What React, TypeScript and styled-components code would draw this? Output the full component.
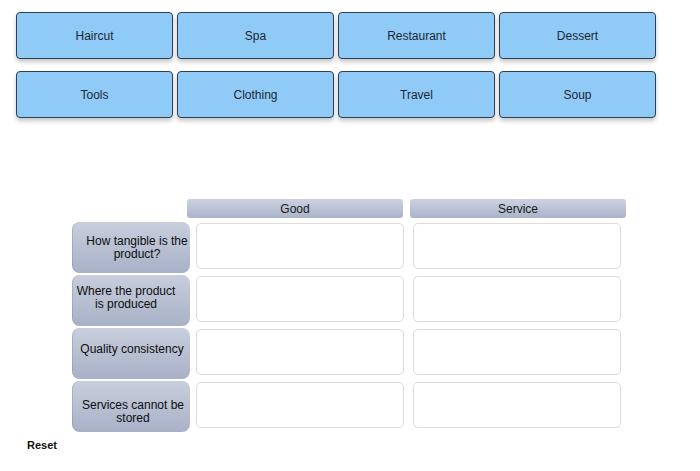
import React from 'react';
import styled, { createGlobalStyle } from 'styled-components';

const GlobalStyle = createGlobalStyle`
  body {
    margin: 0;
    background: #fff;
    font-family: 'Liberation Sans', Arial, sans-serif;
    color: #111;
  }
`;

const Page = styled.div`
  width: 700px;
  height: 471px;
  padding: 12px 0 0 16px;
  box-sizing: border-box;
`;

const ChoiceGrid = styled.div`
  display: grid;
  grid-template-columns: repeat(4, 157px);
  grid-auto-rows: 47px;
  column-gap: 4px;
  row-gap: 12px;
`;

const Choice = styled.button`
  display: flex;
  align-items: center;
  justify-content: center;
  background: #90cbf8;
  border: 1px solid #2f3f52;
  border-radius: 4px;
  box-shadow: 0 3px 4px rgba(0, 0, 0, 0.22);
  font-family: inherit;
  font-size: 12px;
  color: #1c2733;
  padding: 0;
`;

const Table = styled.div`
  margin: 81px 0 0 56px;
  display: flex;
  flex-direction: column;
  gap: 2px;
`;

const HeaderRow = styled.div`
  display: flex;
  gap: 7px;
  margin-left: 115px;
  margin-bottom: 2px;
`;

const ColumnHead = styled.div`
  width: 216px;
  height: 19px;
  display: flex;
  align-items: center;
  justify-content: center;
  background: linear-gradient(#ccd2e1, #a9b3c9);
  border-radius: 3px;
  font-size: 12px;
  color: #1a1a1a;
`;

const Row = styled.div`
  display: flex;
  align-items: flex-start;
  height: 51px;
`;

const Label = styled.div<{ $dx: number; $dy: number }>`
  width: 118px;
  height: 51px;
  box-sizing: border-box;
  display: flex;
  align-items: center;
  justify-content: center;
  padding: ${(p) => Math.max(0, 2 * p.$dy)}px ${(p) => Math.max(0, -2 * p.$dx)}px
    ${(p) => Math.max(0, -2 * p.$dy)}px ${(p) => Math.max(0, 2 * p.$dx)}px;
  text-align: center;
  white-space: pre-line;
  background: linear-gradient(#c8cedd, #a8b1c7);
  border-radius: 8px;
  box-shadow: inset 1px 0 0 rgba(90, 100, 125, 0.25);
  font-size: 12px;
  line-height: 13px;
  color: #0d0d0d;
`;

const DropCell = styled.div<{ $gap: number }>`
  width: 208px;
  height: 46px;
  box-sizing: border-box;
  margin: 1px 0 0 ${(p) => p.$gap}px;
  background: #fff;
  border: 1px solid #dcdcdc;
  border-radius: 5px;
`;

const Reset = styled.div`
  margin: 7px 0 0 11px;
  font-size: 11px;
  font-weight: bold;
  color: #111;
`;

const choices = ['Haircut', 'Spa', 'Restaurant', 'Dessert', 'Tools', 'Clothing', 'Travel', 'Soup'];

const rows = [
  { text: 'How tangible is the\nproduct?', dx: 6, dy: 0 },
  { text: 'Where the product\nis produced', dx: -5, dy: -3 },
  { text: 'Quality consistency', dx: 1, dy: -4 },
  { text: 'Services cannot be\nstored', dx: 2, dy: 5 },
];

const App: React.FC = () => (
  <>
    <GlobalStyle />
    <Page>
      <ChoiceGrid>
        {choices.map((c) => (
          <Choice key={c}>{c}</Choice>
        ))}
      </ChoiceGrid>
      <Table>
        <HeaderRow>
          <ColumnHead>Good</ColumnHead>
          <ColumnHead>Service</ColumnHead>
        </HeaderRow>
        {rows.map((r) => (
          <Row key={r.text}>
            <Label $dx={r.dx} $dy={r.dy}>
              {r.text}
            </Label>
            <DropCell $gap={6} />
            <DropCell $gap={9} />
          </Row>
        ))}
      </Table>
      <Reset>Reset</Reset>
    </Page>
  </>
);

export default App;
